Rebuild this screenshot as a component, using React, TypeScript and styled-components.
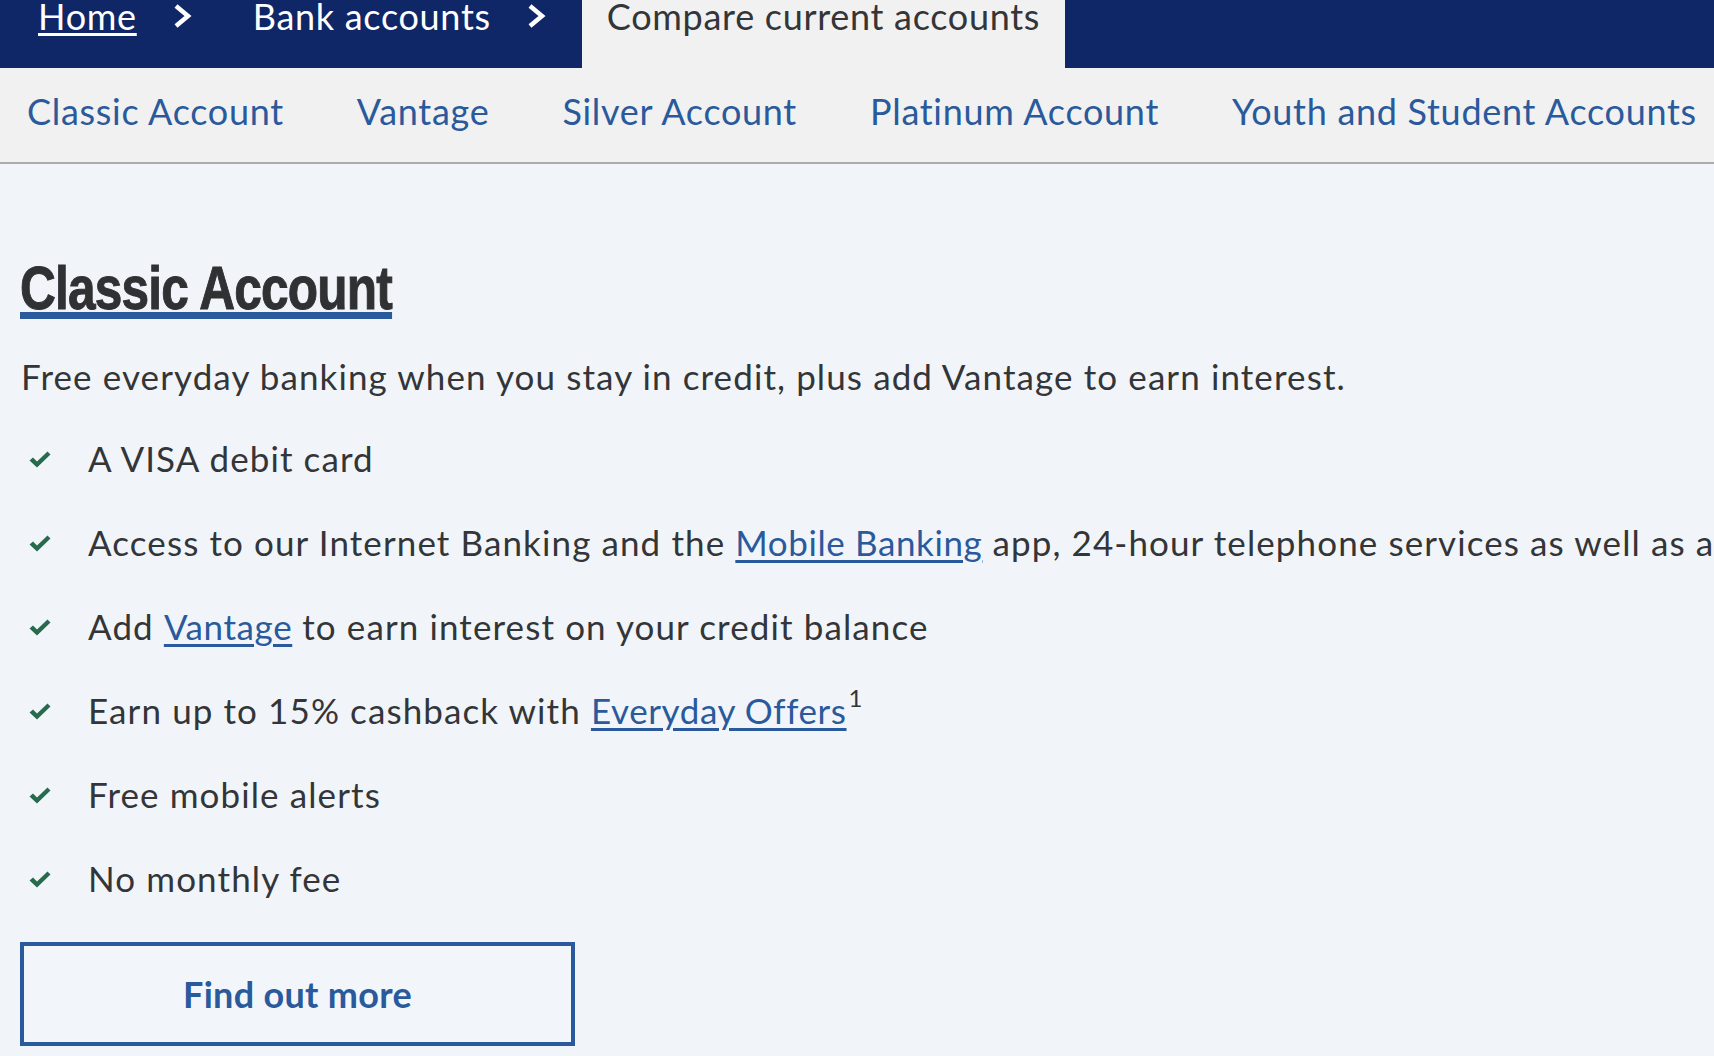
import { createGlobalStyle, styled } from 'styled-components';

const navItems = [
  'Classic Account',
  'Vantage',
  'Silver Account',
  'Platinum Account',
  'Youth and Student Accounts',
];

export default function App() {
  return (
    <>
      <GlobalStyle />
      <Page>
        <Breadcrumb>
          <Crumb>
            <CrumbLink href="#">Home</CrumbLink>
          </Crumb>
          <Chevron />
          <Crumb>Bank accounts</Crumb>
          <Chevron />
          <CurrentCrumb>Compare current accounts</CurrentCrumb>
        </Breadcrumb>
        <SubNav>
          {navItems.map((item) => (
            <SubNavLink key={item} href="#">
              {item}
            </SubNavLink>
          ))}
        </SubNav>
        <Content>
          <HeadingRow>
            <Heading>Classic Account</Heading>
          </HeadingRow>
          <Intro>
            Free everyday banking when you stay in credit, plus add Vantage to
            earn interest.
          </Intro>
          <List>
            <Item>
              <Check />
              <span>A VISA debit card</span>
            </Item>
            <Item>
              <Check />
              <span>
                Access to our Internet Banking and the{' '}
                <InlineLink href="#">Mobile Banking</InlineLink> app, 24-hour
                telephone services as well as access in branch
              </span>
            </Item>
            <Item>
              <Check />
              <span>
                Add <InlineLink href="#">Vantage</InlineLink> to earn interest on
                your credit balance
              </span>
            </Item>
            <Item>
              <Check />
              <span>
                Earn up to 15% cashback with{' '}
                <InlineLink href="#">Everyday Offers</InlineLink>
                <Sup>1</Sup>
              </span>
            </Item>
            <Item>
              <Check />
              <span>Free mobile alerts</span>
            </Item>
            <Item>
              <Check />
              <span>No monthly fee</span>
            </Item>
          </List>
          <OutlineButton>Find out more</OutlineButton>
        </Content>
      </Page>
    </>
  );
}

function Chevron() {
  return (
    <ChevronIcon width="19" height="26" viewBox="0 0 19 26">
      <polyline
        points="3,3 15,13 3,23"
        fill="none"
        stroke="#fff"
        strokeWidth="4.5"
      />
    </ChevronIcon>
  );
}

function Check() {
  return (
    <CheckIcon width="22" height="17" viewBox="0 0 22 17">
      <path d="M0.5 9.5 L4 6.5 L8 10.5 L18.5 0.5 L21.5 3.5 L8 16.5 Z" fill="#286a4c" />
    </CheckIcon>
  );
}

const GlobalStyle = createGlobalStyle`
  html, body {
    margin: 0;
    padding: 0;
    overflow: hidden;
    background: #f1f5f9;
  }
  body {
    font-family: Lato, "Noto Sans", "Liberation Sans", sans-serif;
    color: #333538;
  }
`;

const Page = styled.div`
  width: 1714px;
  height: 1056px;
  overflow: hidden;
  background: #f1f5f9;
`;

const Breadcrumb = styled.nav`
  display: flex;
  align-items: flex-start;
  height: 68px;
  padding-left: 13px;
  background: #0f2766;
  font-size: 36px;
  line-height: 36px;
  letter-spacing: 0.7px;
`;

const Crumb = styled.span`
  padding: 0 25px;
  margin-top: -2px;
  color: #fff;
  white-space: nowrap;
`;

const CrumbLink = styled.a`
  color: #fff;
  text-decoration: underline;
  text-decoration-thickness: 3px;
  text-underline-offset: 3px;
`;

const ChevronIcon = styled.svg`
  flex: none;
  margin: 3px 36px 0 11px;
`;

const CurrentCrumb = styled.span`
  height: 68px;
  padding: 0 25px;
  background: #f1f1f1;
  color: #333538;
  white-space: nowrap;
  line-height: 32px;
`;

const SubNav = styled.nav`
  display: flex;
  align-items: flex-start;
  gap: 73px;
  height: 96px;
  padding: 25px 0 0 27px;
  box-sizing: border-box;
  background: #f1f1f1;
  border-bottom: 2px solid #acacac;
  white-space: nowrap;
`;

const SubNavLink = styled.a`
  color: #2a5a9c;
  text-decoration: none;
  font-size: 36px;
  line-height: 36px;
  letter-spacing: 0.7px;
`;

const Content = styled.main`
  padding: 93px 0 0 20px;
`;

const HeadingRow = styled.div`
  height: 62px;
`;

const Heading = styled.h1`
  margin: 0;
  display: inline-block;
  transform: scaleX(0.8);
  transform-origin: left center;
  font-family: "Liberation Sans", Arial, sans-serif;
  font-weight: 700;
  font-size: 62px;
  line-height: 62px;
  letter-spacing: -1px;
  white-space: nowrap;
  color: #2f3133;
  -webkit-text-stroke: 1px #2f3133;
  text-decoration: underline;
  text-decoration-color: #2a5a9c;
  text-decoration-thickness: 7px;
  text-underline-offset: 3px;
`;

const Intro = styled.p`
  margin: 39px 0 46px 1px;
  font-size: 35px;
  line-height: 36px;
  letter-spacing: 1.1px;
  white-space: nowrap;
`;

const List = styled.ul`
  list-style: none;
  margin: 0;
  padding: 0;
`;

const Item = styled.li`
  display: flex;
  align-items: flex-start;
  margin-bottom: 48px;
  font-size: 35px;
  line-height: 36px;
  letter-spacing: 1.1px;
  white-space: nowrap;
`;

const CheckIcon = styled.svg`
  flex: none;
  margin: 11px 37px 0 9px;
`;

const InlineLink = styled.a`
  color: #2a5a9c;
  letter-spacing: 0.6px;
  text-decoration: underline;
  text-decoration-thickness: 3px;
  text-underline-offset: 4px;
`;

const Sup = styled.sup`
  font-size: 24px;
  line-height: 0;
  vertical-align: baseline;
  position: relative;
  top: -17px;
  margin-left: 2px;
`;

const OutlineButton = styled.button`
  display: flex;
  align-items: center;
  justify-content: center;
  width: 555px;
  height: 104px;
  margin-top: -2px;
  border: 4px solid #2a5a9c;
  background: #f2f6fa;
  color: #2a5a9c;
  font-family: Lato, "Noto Sans", sans-serif;
  font-weight: 700;
  font-size: 36px;
  letter-spacing: 0.3px;
  cursor: pointer;
`;
